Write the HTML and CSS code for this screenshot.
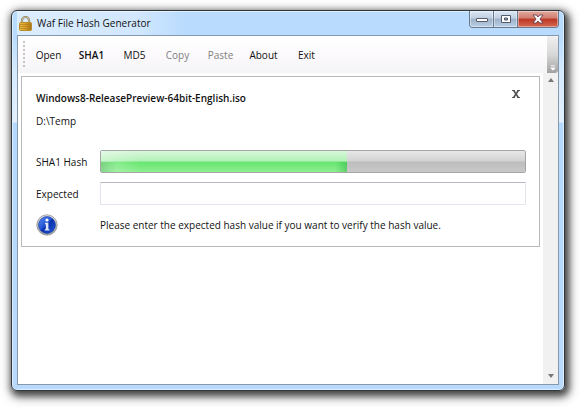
FILE: index.html
```html
<!DOCTYPE html>
<html lang="en">
<head>
<meta charset="utf-8">
<title>Waf File Hash Generator</title>
<link rel="stylesheet" href="styles.css">
</head>
<body>
<div class="window">
  <header class="titlebar">
    <svg class="lock" viewBox="0 0 13 15" aria-hidden="true">
      <defs>
        <linearGradient id="brass" x1="0" x2="1" y1="0" y2="0">
          <stop offset="0" stop-color="#e9bd45"/><stop offset=".4" stop-color="#e0a92c"/><stop offset="1" stop-color="#a87310"/>
        </linearGradient>
      </defs>
      <path d="M3 7V4.2a3.5 3.2 0 0 1 7 0V7" fill="none" stroke="#8b8162" stroke-width="2.2"/>
      <path d="M3 7V4.2a3.5 3.2 0 0 1 7 0V7" fill="none" stroke="#cfc49a" stroke-width="1"/>
      <rect x=".5" y="6.5" width="12" height="8" rx="1" fill="url(#brass)" stroke="#b98a2a"/>
      <path d="M1 8.5h11M1 10.5h11M1 12.5h11" stroke="#a9781b" stroke-width=".6"/>
    </svg>
    <h1 class="title">Waf File Hash Generator</h1>
    <div class="caption">
      <button class="cap" aria-label="Minimize"><svg viewBox="0 0 12 10"><rect x=".5" y="4.5" width="11" height="3" rx=".5" fill="#fff" stroke="#555b6b"/></svg></button>
      <button class="cap" aria-label="Maximize"><svg viewBox="0 0 12 10"><path d="M1.5 1.5h9v7h-9z" fill="#fff" stroke="#555b6b"/><path d="M4.5 4h3v2h-3z" fill="#8da0b8" stroke="#555b6b"/></svg></button>
      <button class="cap cap-close" aria-label="Close"><svg viewBox="0 0 12 10"><path d="M1 1h3.3L6 3l1.7-2H11L7.9 5 11 9H7.7L6 7 4.3 9H1l3.1-4z" fill="#fff" stroke="#684452" stroke-width=".9"/></svg></button>
    </div>
  </header>
  <main class="client">
    <nav class="toolbar">
      <span class="grip"></span>
      <button class="tool">Open</button>
      <button class="tool tool-strong">SHA1</button>
      <button class="tool">MD5</button>
      <button class="tool" disabled>Copy</button>
      <button class="tool" disabled>Paste</button>
      <button class="tool">About</button>
      <button class="tool">Exit</button>
      <button class="overflow" aria-label="Toolbar options"><svg viewBox="0 0 7 7"><path d="M1 1h5M1 3.5h5L3.5 6z" fill="#fff" stroke="#fff"/></svg></button>
    </nav>
    <div class="view">
      <div class="files">
        <section class="card">
          <div class="card-head">
            <h2 class="filename">Windows8-ReleasePreview-64bit-English.iso</h2>
            <button class="remove" aria-label="Remove file"><svg viewBox="0 0 8 8"><path d="M0 0h3v1l1 1.5L5 1V0h3v1H7L5 4l2 3h1v1H5V7L4 5.5 3 7v1H0V7h1l2-3-2-3H0z" fill="#555"/></svg></button>
          </div>
          <p class="path">D:\Temp</p>
          <div class="form">
            <label for="hash">SHA1 Hash</label>
            <progress class="bar" id="hash" max="100" value="58"></progress>
            <label for="expected">Expected</label>
            <input class="box" id="expected" type="text">
            <svg class="info" viewBox="0 0 22 22" aria-hidden="true">
              <defs>
                <linearGradient id="rim" x1="0" x2="0" y1="0" y2="1"><stop offset="0" stop-color="#eee"/><stop offset="1" stop-color="#a8a8a8"/></linearGradient>
                <linearGradient id="blue" x1="0" x2="1" y1="0" y2="1"><stop offset="0" stop-color="#5b8df0"/><stop offset=".45" stop-color="#2353d5"/><stop offset=".5" stop-color="#0b32ac"/><stop offset="1" stop-color="#2459dc"/></linearGradient>
              </defs>
              <circle cx="11" cy="11" r="10.2" fill="url(#rim)" stroke="#8d8d8d" stroke-width=".8"/>
              <circle cx="11" cy="11" r="8.5" fill="url(#blue)" stroke="#173a9c" stroke-width=".6"/>
              <circle cx="11" cy="6" r="1.6" fill="#fff"/>
              <path d="M9 8.8h3.4v6.4h1v1.3H8.8v-1.3h1v-5H9z" fill="#e0e6fa"/>
            </svg>
            <p class="hint">Please enter the expected hash value if you want to verify the hash value.</p>
          </div>
        </section>
      </div>
      <div class="scroll">
        <svg viewBox="0 0 6 4"><path d="M0 4l3-4 3 4z" fill="#777"/></svg>
        <svg viewBox="0 0 6 4"><path d="M0 0h6L3 4z" fill="#777"/></svg>
      </div>
    </div>
  </main>
</div>
</body>
</html>
```

FILE: styles.css
```css
* { box-sizing: border-box; }

body {
  margin: 0;
  min-height: 100vh;
  display: flex;
  padding: 10px 15px 16px 11px;
  background: #fff;
  color: #111;
  font: 10px/16px "Open Sans", "Noto Sans", sans-serif;
}

h1, h2, p { margin: 0; font-size: inherit; font-weight: inherit; }

button {
  padding: 0;
  border: 0;
  background: none;
  color: inherit;
  font: inherit;
}

svg { display: block; }

.window {
  flex: 1;
  min-width: 0;
  display: flex;
  flex-direction: column;
  padding: 0 5px 5px;
  border: 1px solid #30363c;
  border-radius: 6px;
  background: linear-gradient(#b9dbfe 0, #b9dbfe 24px, #d5e9fe 60px, #e3f0fd 111px, #b5d8fe 112px, #b9dafd 100%);
  box-shadow: inset 0 0 0 1px #dcefff, 2px 3px 7px 2px rgba(0, 0, 0, .65), 2px 4px 12px 3px rgba(0, 0, 0, .25);
}

.titlebar {
  display: flex;
  align-items: center;
  gap: 5px;
  height: 24px;
  padding-left: 2px;
  flex: none;
  background: linear-gradient(90deg, rgba(255, 255, 255, .5), rgba(255, 255, 255, .35) 120px, transparent 170px);
}

.lock { width: 13px; height: 15px; }

.title { flex: 1; }

.caption {
  align-self: flex-start;
  display: flex;
  height: 17px;
  border: 1px solid #68798d;
  border-top: 0;
  border-radius: 0 0 4px 4px;
  overflow: hidden;
}

.cap {
  display: grid;
  place-items: center;
  width: 24px;
  border-right: 1px solid #68798d;
  background: linear-gradient(#dce8f4, #bfcfe0 45%, #9db1c8 50%, #b9d0e6);
  box-shadow: inset 0 0 0 1px rgba(255, 255, 255, .4);
}

.cap svg { width: 12px; height: 10px; }

.cap-close {
  width: 40px;
  border-right: 0;
  background: linear-gradient(#e3aa9f, #d07b6c 45%, #bb3625 50%, #d4694f);
}

.client {
  flex: 1;
  display: flex;
  flex-direction: column;
  border: 1px solid #8598ac;
  background: #fff;
}

.toolbar {
  display: flex;
  align-items: center;
  height: 37px;
  padding-left: 5px;
  background: linear-gradient(#fff, #fbf9fc 55%, #f5f4f5);
}

.grip {
  width: 4px;
  height: 27px;
  background: radial-gradient(circle at 1px 1px, #c4c4c4 1px, transparent 1px) 0 0 / 4px 4px;
}

.tool { width: 43px; }
.tool-strong { font-weight: 600; }
.tool:disabled { color: #808080; }

.overflow {
  display: flex;
  align-items: flex-end;
  justify-content: center;
  align-self: stretch;
  width: 11px;
  margin-left: auto;
  padding-bottom: 2px;
  border-radius: 0 3px 3px 0;
  background: linear-gradient(#f0f0f0, #d8d8d8 50%, #a2a2a2);
}

.overflow svg { width: 6px; height: 6px; }

.view { flex: 1; display: flex; }

.files { flex: 1; padding: 3px; }

.card {
  padding: 13px 13px 10px 14px;
  border: 1px solid #b8b8b8;
}

.card-head { display: flex; justify-content: space-between; }
.filename { font-weight: 600; }
.remove { align-self: flex-start; margin-right: 6px; }
.remove svg { width: 8px; height: 8px; }
.path { margin-top: 7px; }

.form {
  display: grid;
  grid-template-columns: 64px 1fr;
  align-items: center;
  row-gap: 9px;
  margin-top: 21px;
}

.bar {
  appearance: none;
  display: block;
  width: 100%;
  height: 23px;
  border: 1px solid #a5a5a5;
  border-radius: 2px;
  overflow: hidden;
}

.bar::-webkit-progress-bar {
  background: linear-gradient(#e7e7e7, #d2d2d2 48%, #bdbdbd 52%, #c8c8c8);
}

.bar::-webkit-progress-value {
  background:
    linear-gradient(90deg, transparent, rgba(30, 165, 60, .4)) right bottom / 12px 50% no-repeat,
    linear-gradient(90deg, rgba(60, 160, 70, .35), transparent) left bottom / 16px 50% no-repeat,
    linear-gradient(90deg, rgba(255, 255, 255, .3), transparent) left top / 40px 100% no-repeat,
    linear-gradient(#d8f7da, #b2f1b8 48%, #67e76f 52%, #8dee90);
}

.box {
  width: 100%;
  height: 23px;
  padding: 0 4px;
  border: 1px solid #e2e5ec;
  border-top-color: #b7b9c0;
  border-radius: 1px;
  background: #fff;
  font: inherit;
}

.info { width: 22px; height: 22px; }

.scroll {
  display: flex;
  flex-direction: column;
  align-items: center;
  justify-content: space-between;
  width: 15px;
  padding: 5px 0 6px;
  background: #f1f1f1;
}

.scroll svg { width: 6px; height: 4px; }
```
